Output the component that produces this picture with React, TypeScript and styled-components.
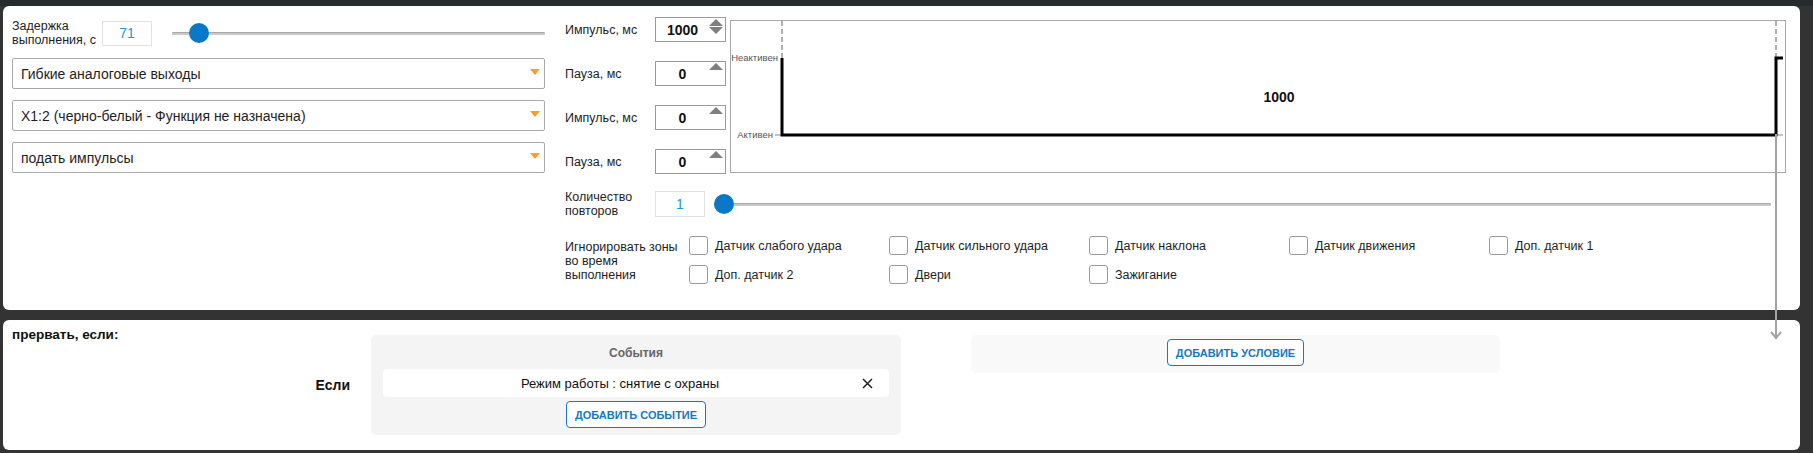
import styled, { createGlobalStyle } from "styled-components"

const GlobalStyle = createGlobalStyle`
	html, body {
		margin: 0;
		padding: 0;
		background: #333;
	}
	body {
		font-family: "Liberation Sans", Arial, sans-serif;
		color: #1e1e1e;
	}
	* {
		box-sizing: border-box;
	}
`

const PULSES = [
	{ label: "Импульс, мс", value: 1000, canDecrease: true },
	{ label: "Пауза, мс", value: 0, canDecrease: false },
	{ label: "Импульс, мс", value: 0, canDecrease: false },
	{ label: "Пауза, мс", value: 0, canDecrease: false },
]

const ZONES = [
	"Датчик слабого удара",
	"Датчик сильного удара",
	"Датчик наклона",
	"Датчик движения",
	"Доп. датчик 1",
	"Доп. датчик 2",
	"Двери",
	"Зажигание",
]

const SELECTS = ["Гибкие аналоговые выходы", "X1:2 (черно-белый - Функция не назначена)", "подать импульсы"]

type SliderProps = {
	value: number
	min: number
	max: number
}

const Slider = ({ value, min, max }: SliderProps) => {
	const pct = (value - min) / (max - min)
	return (
		<Track>
			<Knob style={{ left: `calc((100% - 20px) * ${pct})` }} />
		</Track>
	)
}

const UpArrow = () => (
	<svg width="14" height="7" viewBox="0 0 14 7">
		<polygon points="7,0 14,7 0,7" fill="#7f7f7f" />
	</svg>
)

const DownArrow = () => (
	<svg width="14" height="7" viewBox="0 0 14 7">
		<polygon points="0,0 14,0 7,7" fill="#7f7f7f" />
	</svg>
)

const CloseIcon = () => (
	<svg width="11" height="11" viewBox="0 0 11 11">
		<path d="M1 1 L10 10 M10 1 L1 10" stroke="#222" strokeWidth="1.5" fill="none" />
	</svg>
)

const PulseChart = () => (
	<ChartBox>
		<svg width="1054" height="151" viewBox="0 0 1054 151">
			<line x1="51" y1="0" x2="51" y2="37" stroke="#b0b0b0" strokeWidth="2" strokeDasharray="5 3" />
			<line x1="1045" y1="0" x2="1045" y2="37" stroke="#b0b0b0" strokeWidth="2" strokeDasharray="5 3" />
			<line x1="44" y1="114" x2="50" y2="114" stroke="#b0b0b0" strokeWidth="1.5" />
			<line x1="1045" y1="114" x2="1052" y2="114" stroke="#b0b0b0" strokeWidth="1.5" />
			<polyline points="51,37 51,114 1045,114 1045,37 1052,37" stroke="#000" strokeWidth="3" fill="none" />
			<text x="47" y="40" textAnchor="end" fontSize="9.5" fill="#555" fontFamily="Liberation Sans, Arial, sans-serif">
				Неактивен
			</text>
			<text x="42" y="117" textAnchor="end" fontSize="9.5" fill="#555" fontFamily="Liberation Sans, Arial, sans-serif">
				Активен
			</text>
			<text x="548" y="81" textAnchor="middle" fontSize="14" fontWeight="bold" fill="#111" fontFamily="Liberation Sans, Arial, sans-serif">
				1000
			</text>
		</svg>
		<TimeArrow width="12" height="207" viewBox="0 0 12 207">
			<line x1="6" y1="0" x2="6" y2="205" stroke="#a3a3a3" strokeWidth="2" />
			<polyline points="1,198 6,204 11,198" stroke="#a3a3a3" strokeWidth="2" fill="none" />
		</TimeArrow>
	</ChartBox>
)

const App = () => {
	return (
		<Page>
			<GlobalStyle />
			<TopPanel>
				<LeftColumn>
					<DelayRow>
						<FieldLabel width={90}>Задержка выполнения, с</FieldLabel>
						<NumberBox>71</NumberBox>
						<SliderWrap>
							<Slider value={71} min={0} max={1500} />
						</SliderWrap>
					</DelayRow>
					{SELECTS.map((s) => (
						<SelectBox key={s}>
							<span>{s}</span>
							<SelectArrow />
						</SelectBox>
					))}
				</LeftColumn>

				<RightColumn>
					<PulseSection>
						<PulseRows>
							{PULSES.map((p, i) => (
								<PulseRow key={i}>
									<FieldLabel width={90}>{p.label}</FieldLabel>
									<SpinBox>
										<SpinValue>{p.value}</SpinValue>
										<SpinArrows>
											<UpArrow />
											{p.canDecrease && <DownArrow />}
										</SpinArrows>
									</SpinBox>
								</PulseRow>
							))}
						</PulseRows>
						<PulseChart />
					</PulseSection>

					<CountRow>
						<FieldLabel width={90}>Количество повторов</FieldLabel>
						<NumberBox tall>1</NumberBox>
						<SliderWrap gap={9} trailing={16}>
							<Slider value={1} min={1} max={100} />
						</SliderWrap>
					</CountRow>

					<IgnoreRow>
						<IgnoreLabel>
							Игнорировать зоны
							<br />
							во время
							<br />
							выполнения
						</IgnoreLabel>
						<CheckGrid>
							{ZONES.map((z) => (
								<CheckItem key={z}>
									<CheckBox />
									<span>{z}</span>
								</CheckItem>
							))}
						</CheckGrid>
					</IgnoreRow>
				</RightColumn>
			</TopPanel>

			<BottomPanel>
				<LeftCell>
					<SectionTitle>прервать, если:</SectionTitle>
					<IfLabel>Если</IfLabel>
				</LeftCell>
				<EventsBox>
					<BoxTitle>События</BoxTitle>
					<EventRow>
						<EventText>Режим работы : снятие с охраны</EventText>
						<CloseButton>
							<CloseIcon />
						</CloseButton>
					</EventRow>
					<OutlineButton>Добавить событие</OutlineButton>
				</EventsBox>
				<ConditionsBox>
					<OutlineButton>Добавить условие</OutlineButton>
				</ConditionsBox>
			</BottomPanel>
		</Page>
	)
}

export default App

const Page = styled.div`
	width: 1813px;
	height: 453px;
	overflow: hidden;
	padding-top: 6px;
	background: linear-gradient(#262b2e 0 6px, #333 6px);
	display: flex;
	flex-direction: column;
	gap: 10px;
`

const Panel = styled.section`
	margin-left: 3px;
	width: 1797px;
	background: #fff;
	border-radius: 6px;
	position: relative;
`

const TopPanel = styled(Panel)`
	height: 304px;
	padding: 11px 13px 0 9px;
	display: flex;
	gap: 20px;
`

const LeftColumn = styled.div`
	width: 533px;
	display: flex;
	flex-direction: column;
	gap: 11px;
	padding-top: 2px;
`

const FieldLabel = styled.div<{ width: number }>`
	width: ${({ width }) => width}px;
	flex-shrink: 0;
	font-size: 12.5px;
	line-height: 14px;
	color: #1e1e1e;
`

const DelayRow = styled.div`
	display: flex;
	align-items: center;
	height: 28px;
`

const NumberBox = styled.div<{ tall?: boolean }>`
	width: 50px;
	height: ${({ tall }) => (tall ? 26 : 25)}px;
	flex-shrink: 0;
	border: 1px solid #e2e2e2;
	color: #2596de;
	font-size: 14px;
	display: flex;
	align-items: center;
	justify-content: center;
`

const SliderWrap = styled.div<{ gap?: number; trailing?: number }>`
	flex: 1;
	display: flex;
	align-items: center;
	margin-left: ${({ gap }) => gap ?? 20}px;
	margin-right: ${({ trailing }) => trailing ?? 0}px;
`

const Track = styled.div`
	position: relative;
	flex: 1;
	height: 3px;
	background: #c9c9c9;
	border-radius: 2px;
	box-shadow: inset 0 1px 0 #a8a8a8;
`

const Knob = styled.div`
	position: absolute;
	top: 50%;
	width: 20px;
	height: 20px;
	margin-top: -10px;
	border-radius: 50%;
	background: #0b78c7;
`

const SelectBox = styled.div`
	height: 31px;
	border: 1px solid #a9a9a9;
	border-radius: 2px;
	display: flex;
	align-items: center;
	justify-content: space-between;
	padding: 0 4px 0 8px;
	font-size: 14px;
	color: #1e1e1e;
`

const SelectArrow = styled.span`
	width: 0;
	height: 0;
	border-left: 5.5px solid transparent;
	border-right: 5.5px solid transparent;
	border-top: 6px solid #f4a02a;
	margin-top: -4px;
`

const RightColumn = styled.div`
	flex: 1;
	display: flex;
	flex-direction: column;
`

const PulseSection = styled.div`
	display: flex;
	align-items: flex-start;
`

const PulseRows = styled.div`
	display: flex;
	flex-direction: column;
	gap: 19px;
	width: 161px;
`

const PulseRow = styled.div`
	display: flex;
	align-items: center;
	height: 25px;
`

const SpinBox = styled.div`
	width: 71px;
	height: 25px;
	border: 1px solid #9b9b9b;
	display: flex;
	align-items: stretch;
`

const SpinValue = styled.span`
	flex: 1;
	display: flex;
	align-items: center;
	justify-content: center;
	font-weight: bold;
	font-size: 14px;
	color: #111;
`

const SpinArrows = styled.div`
	width: 16px;
	display: flex;
	flex-direction: column;
	gap: 1px;
	padding-top: 1px;

	svg {
		display: block;
	}
`

const ChartBox = styled.div`
	position: relative;
	margin-left: 4px;
	margin-top: 3px;
	width: 1056px;
	height: 153px;
	border: 1px solid #a8a8a8;

	> svg:first-child {
		display: block;
	}
`

const TimeArrow = styled.svg`
	position: absolute;
	left: 1039px;
	top: 113px;
	z-index: 2;
	overflow: visible;
`

const CountRow = styled.div`
	display: flex;
	align-items: center;
	margin-top: 17px;
	height: 26px;
`

const IgnoreRow = styled.div`
	display: flex;
	margin-top: 19px;
`

const IgnoreLabel = styled.div`
	width: 124px;
	flex-shrink: 0;
	font-size: 12.5px;
	line-height: 14px;
	margin-top: 4px;
	white-space: nowrap;
`

const CheckGrid = styled.div`
	display: grid;
	grid-template-columns: repeat(5, 200px);
	row-gap: 10px;
`

const CheckItem = styled.label`
	display: flex;
	align-items: center;
	gap: 7px;
	height: 19px;
	font-size: 12.5px;
	color: #1e1e1e;
`

const CheckBox = styled.span`
	width: 19px;
	height: 19px;
	border: 1px solid #9a9a9a;
	border-radius: 3px;
	background: #fff;
	flex-shrink: 0;
`

const BottomPanel = styled(Panel)`
	min-height: 130px;
	padding: 7px 0 15px 9px;
	display: flex;
	align-items: stretch;
`

const LeftCell = styled.div`
	width: 338px;
	margin-right: 21px;
	display: grid;
`

const SectionTitle = styled.div`
	grid-area: 1 / 1;
	align-self: start;
	justify-self: start;
	font-weight: bold;
	font-size: 13.5px;
	line-height: 16px;
	color: #111;
`

const IfLabel = styled.div`
	grid-area: 1 / 1;
	align-self: center;
	justify-self: end;
	margin-top: 8px;
	font-weight: bold;
	font-size: 14px;
	color: #111;
`

const EventsBox = styled.div`
	width: 530px;
	margin-top: 8px;
	margin-right: 70px;
	background: #f4f4f4;
	border-radius: 5px;
	padding: 10px 12px 7px;
	display: flex;
	flex-direction: column;
	align-items: center;
`

const BoxTitle = styled.div`
	font-weight: bold;
	font-size: 12px;
	line-height: 16px;
	color: #666;
`

const EventRow = styled.div`
	width: 100%;
	height: 28px;
	margin-top: 8px;
	background: #fff;
	border-radius: 4px;
	display: flex;
	align-items: center;
`

const EventText = styled.span`
	flex: 1;
	text-align: center;
	font-size: 13px;
	color: #111;
	padding-left: 5px;
`

const CloseButton = styled.span`
	display: flex;
	margin: 0 16px 0 10px;
`

const OutlineButton = styled.button`
	height: 27px;
	margin-top: 4px;
	padding: 0 8px;
	border: 1px solid #1678c2;
	border-radius: 4px;
	background: #fff;
	color: #1678c2;
	font-family: "Liberation Sans", Arial, sans-serif;
	font-weight: bold;
	font-size: 11px;
	text-transform: uppercase;
`

const ConditionsBox = styled.div`
	width: 529px;
	align-self: flex-start;
	margin-top: 8px;
	background: #f9f9f9;
	border-radius: 5px;
	padding: 0 0 7px;
	display: flex;
	justify-content: center;
`
